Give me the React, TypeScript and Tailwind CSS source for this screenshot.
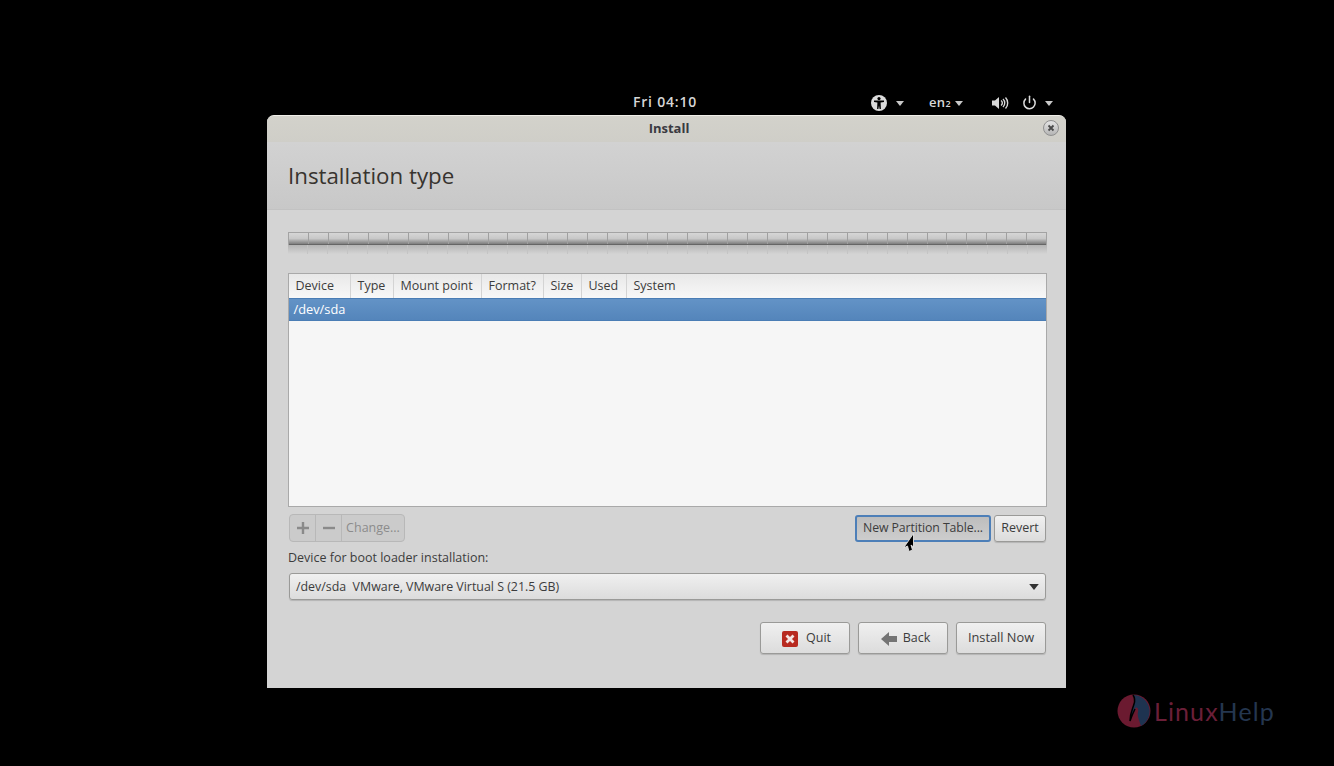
import React from "react";
import { Power } from "lucide-react";

const font = "font-['Open_Sans','Noto_Sans',sans-serif]";
const columns: [string, string][] = [
  ["Device", "w-[62px]"],
  ["Type", "w-[43px]"],
  ["Mount point", "w-[88px]"],
  ["Format?", "w-[62px]"],
  ["Size", "w-[38px]"],
  ["Used", "w-[45px]"],
  ["System", "flex-1"],
];
const segments = Array.from({ length: 38 }, (_, i) => i);

function Caret({ className = "" }: { className?: string }) {
  return (
    <svg width="8" height="5" viewBox="0 0 8 5" className={className}>
      <path d="M0 0h8L4 5z" fill="currentColor" />
    </svg>
  );
}

function Btn({ children, className = "" }: { children: React.ReactNode; className?: string }) {
  return (
    <div
      className={`flex items-center justify-center rounded-[3px] border border-[#9a9a98] bg-gradient-to-b from-[#f0f0f0] to-[#dcdcdc] text-[12.5px] text-[#3c3c3c] shadow-[0_1px_1px_rgba(0,0,0,0.15)] ${className}`}
    >
      {children}
    </div>
  );
}

export default function App() {
  return (
    <div className={`relative h-[766px] w-[1334px] overflow-hidden bg-black ${font}`}>
      <div className="ml-[267px] w-[800px] pt-[90px]">
        {/* top panel */}
        <div className="relative flex h-[25px] items-center justify-end pr-[14px] text-[#d8d8d8]">
          <span className="absolute left-[366px] top-[3px] text-[14px] font-semibold leading-[18px] tracking-[0.8px] text-[#d6d6d6]">
            Fri 04:10
          </span>
          <svg width="16" height="16" viewBox="0 0 16 16" className="mr-[9px]">
            <circle cx="8" cy="8" r="8" fill="#dcdcdc" />
            <circle cx="8" cy="3.6" r="1.6" fill="#000" />
            <path d="M3 5.6h10v1.4l-3.4.6.3 6.4H8.6L8 10.5 7.4 14H6.1l.3-6.4L3 7z" fill="#000" />
          </svg>
          <Caret className="mr-[25px] mt-[2px] text-[#c8c8c8]" />
          <span className="text-[13px] font-semibold leading-none tracking-[0.4px]">
            en<span className="text-[9px]">2</span>
          </span>
          <Caret className="ml-[4px] mr-[29px] mt-[2px] text-[#c8c8c8]" />
          <svg width="18" height="14" viewBox="0 0 18 14" className="mr-[12px]">
            <path d="M0 4.500h3L7 1v12L3 9.500H0z" fill="#d8d8d8" />
            <path d="M9 4.500a3 3 0 0 1 0 5M11 3a5.500 5.500 0 0 1 0 8M13.500 1.500a8 8 0 0 1 0 11" fill="none" stroke="#d8d8d8" strokeWidth="1.400" />
          </svg>
          <Power size={15} strokeWidth={2.4} className="mr-[8px] text-[#dcdcdc]" />
          <Caret className="mt-[2px] text-[#c8c8c8]" />
        </div>

        {/* window */}
        <div className="flex h-[573px] w-[799px] flex-col overflow-hidden rounded-t-[7px] border-t border-[#f0efe9] bg-[#d4d4d4]">
          <div className="relative flex h-[26px] shrink-0 items-center justify-center bg-gradient-to-b from-[#d3d2cb] to-[#cfcec8]">
            <span className="pl-[5px] text-[13px] font-bold text-[#3a3a42]">Install</span>
            <div className="absolute right-[7px] top-[4px] flex h-[16px] w-[16px] items-center justify-center rounded-full border border-[#8f8f8f] bg-gradient-to-b from-[#e4e4e4] to-[#b5b5b5]">
              <svg width="8" height="8" viewBox="0 0 8 8">
                <path d="M1.500 1.500l5 5M6.500 1.500l-5 5" stroke="#4a4a4a" strokeWidth="1.800" />
              </svg>
            </div>
          </div>

          <div className="flex h-[68px] shrink-0 items-center border-b border-[#c2c2c2] bg-gradient-to-b from-[#d2d2d2] to-[#c8c8c8] pl-[21px] pt-[2px]">
            <h1 className="text-[22.3px] font-normal leading-none text-[#38342f]">Installation type</h1>
          </div>

          <div className="flex flex-1 flex-col px-[21px] pt-[22px]">
            {/* partition bar */}
            <div className="h-[13px] w-[759px] border-x border-t border-[#a3a3a3]">
              <div className="flex h-[12px] border-b border-[#666] bg-gradient-to-b from-[#d6d6d6] via-[#c8c8c8] to-[#7e7e7e]">
                {segments.map((i) => (
                  <div key={i} className="h-full flex-1 border-r border-[#a0a0a0] last:border-r-0" />
                ))}
              </div>
            </div>
            <div className="flex h-[9px] w-[759px] bg-gradient-to-b from-[#b4b4b4] to-[#d4d4d4]">
              {segments.map((i) => (
                <div key={i} className="h-full flex-1 border-r border-[#c4c4c4] last:border-r-0" />
              ))}
            </div>

            {/* table */}
            <div className="mt-[19px] flex h-[234px] w-[759px] flex-col border border-[#a9a9a9] bg-[#f6f6f6]">
              <div className="flex h-[24px] shrink-0 bg-gradient-to-b from-[#e8e8e8] to-[#f8f8f8] text-[12.5px] text-[#3c3c3c]">
                {columns.map(([name, w]) => (
                  <div
                    key={name}
                    className={`flex items-center border-r border-[#d4d4d4] pl-[6.500px] last:border-r-0 ${w}`}
                  >
                    {name}
                  </div>
                ))}
              </div>
              <div className="flex h-[23px] shrink-0 items-center border-y border-[#4a7db5] bg-gradient-to-b from-[#6393c6] to-[#5485bb] pl-[4.500px] text-[12.8px] text-white">
                /dev/sda
              </div>
            </div>

            {/* toolbar */}
            <div className="ml-px mt-[7px] flex h-[28px] w-[757px] items-center justify-between">
              <div className="flex h-[28px] w-[116px] rounded-[4px] border border-[#b8b8b8] bg-[#cbcbcb] text-[12.5px] text-[#8c8c8c]">
                <div className="flex w-[26px] items-center justify-center border-r border-[#b8b8b8]">
                  <svg width="12" height="12" viewBox="0 0 12 12">
                    <path d="M6 0v12M0 6h12" stroke="#8a8a8a" strokeWidth="2.400" />
                  </svg>
                </div>
                <div className="flex w-[26px] items-center justify-center border-r border-[#b8b8b8]">
                  <svg width="12" height="12" viewBox="0 0 12 12">
                    <path d="M0 6h12" stroke="#8a8a8a" strokeWidth="2.400" />
                  </svg>
                </div>
                <div className="flex flex-1 items-center justify-center">Change...</div>
              </div>
              <div className="flex gap-[3px]">
                <div className="relative flex h-[27px] w-[136px] items-center justify-center rounded-[3px] border-2 border-[#4d7fb8] bg-gradient-to-b from-[#bdbdbd] to-[#cdcdcd] pt-px text-[12.3px] tracking-[-0.1px] text-[#3c3c3c]">
                  New Partition Table...
                  <svg width="14" height="19" viewBox="0 0 14 19" className="absolute left-[45px] top-[16px]">
                    <path d="M11.500 0.500V14L9 12l1.500 5-3.500 1.500L5.500 13 1.500 15z" fill="#000" stroke="#e4e4e4" strokeWidth="0.900" />
                  </svg>
                </div>
                <Btn className="h-[27px] w-[52px]">Revert</Btn>
              </div>
            </div>

            <label className="mt-[7px] text-[12.5px] leading-[18px] text-[#3c3c3c]">Device for boot loader installation:</label>

            <Btn className="ml-px mt-[6px] h-[27px] w-[757px] !justify-between pl-[6px] pr-[6px] pt-px">
              <span className="whitespace-pre text-[12.4px]">/dev/sda  VMware, VMware Virtual S (21.5 GB)</span>
              <Caret className="h-[6px] w-[10px] text-[#333]" />
            </Btn>

            <div className="mt-[22px] flex w-[758px] justify-end gap-[8px]">
              <Btn className="h-[32px] w-[90px] gap-[8px] pl-[3px] pt-px">
                <svg width="16" height="16" viewBox="0 0 16 16">
                  <rect width="16" height="16" rx="2" fill="#b82a20" />
                  <path d="M4.500 4.500l7 7M11.500 4.500l-7 7" stroke="#f4e6e4" strokeWidth="2.800" />
                </svg>
                Quit
              </Btn>
              <Btn className="h-[32px] w-[90px] gap-[6px] pl-[5px] pt-px">
                <svg width="16" height="14" viewBox="0 0 16 14">
                  <path d="M0 7l8-7v4h8v6H8v4z" fill="#747474" />
                </svg>
                Back
              </Btn>
              <Btn className="h-[32px] w-[90px] !text-[12.8px]">Install Now</Btn>
            </div>
          </div>
        </div>
      </div>

      {/* watermark */}
      <div className="absolute left-[1117px] top-[694px] flex items-center">
        <svg width="34" height="34" viewBox="0 0 34 34">
          <circle cx="17" cy="17" r="16.500" fill="#6b1a30" />
          <path d="M16 1A16.500 16.500 0 0 1 24 32C22 26 20 22 21 18 22 14 19 12 18 15 16 19 14 24 13 27 13 19 16 14 17 10 18 7 18 4 16 1z" fill="#1e3350" />
          <path d="M16 1C18 4 18 7 17 10 16 14 13 19 13 27 14 24 16 19 18 15" fill="none" stroke="#000" strokeWidth="1.500" />
        </svg>
        <span className="ml-[3px] font-['Lato',sans-serif] text-[25px] leading-none tracking-[1.100px]">
          <span className="text-[#6b1f38]">Linux</span>
          <span className="text-[#24364f]">Help</span>
        </span>
      </div>
    </div>
  );
}
